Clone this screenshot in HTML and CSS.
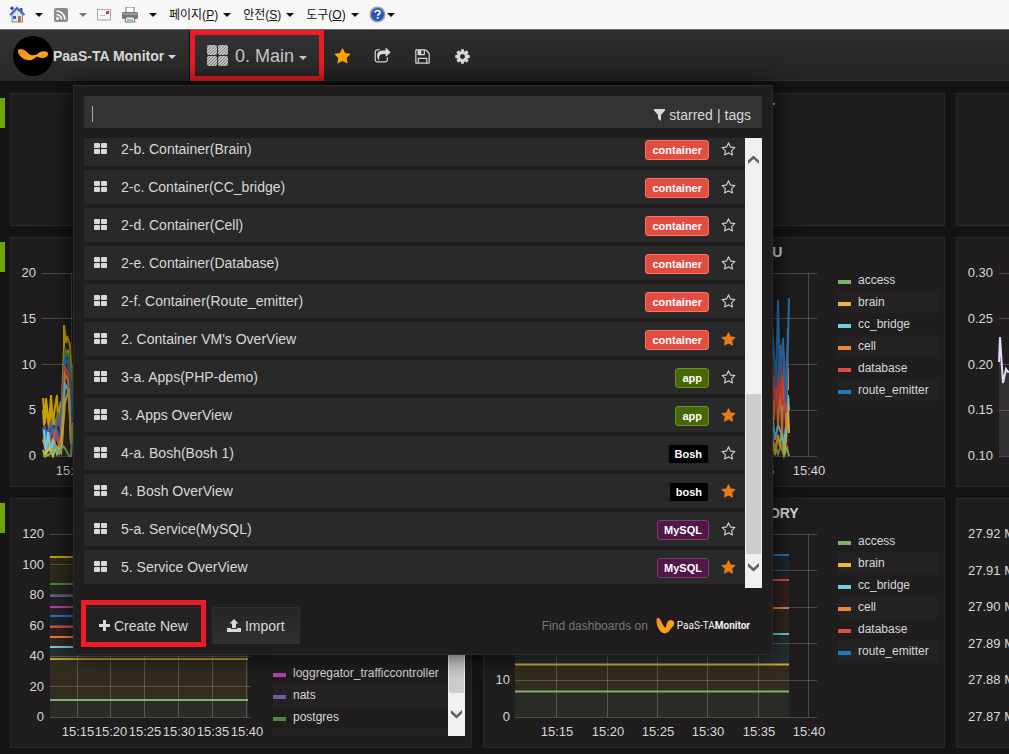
FILE: index.html
```html
<!DOCTYPE html>
<html lang="ko">
<head>
<meta charset="utf-8">
<meta name="viewport" content="width=device-width, initial-scale=1">
<title>PaaS-TA Monitor</title>
<link rel="stylesheet" href="styles.css">
</head>
<body>
<svg class="defs" aria-hidden="true">
  <defs>
    <pattern id="hatch" width="3" height="3" patternUnits="userSpaceOnUse"><rect width="3" height="3" fill="#c4c4c4"/><path d="M-1 1L1-1M0 3L3 0M2 4L4 2" stroke="#858585" stroke-width="1"/></pattern>
    <linearGradient id="flame" x1="0" y1="0" x2="1" y2="1"><stop offset="0" stop-color="#f58220"/><stop offset=".6" stop-color="#fba61c"/><stop offset="1" stop-color="#f58220"/></linearGradient>
  </defs>
  <symbol id="grid" viewBox="0 0 13 11"><path d="M1 0h4q1 0 1 1v3q0 1-1 1H1Q0 5 0 4V1q0-1 1-1zM8 0h4q1 0 1 1v3q0 1-1 1H8Q7 5 7 4V1q0-1 1-1zM1 6h4q1 0 1 1v3q0 1-1 1H1q-1 0-1-1V7q0-1 1-1zM8 6h4q1 0 1 1v3q0 1-1 1H8q-1 0-1-1V7q0-1 1-1z"/></symbol>
  <symbol id="star" viewBox="0 0 1792 1792"><path d="M1728 647q0 22-26 48l-363 354 86 500q1 7 1 20 0 21-10.500 35.500t-30.500 14.500q-19 0-40-12l-449-236-449 236q-22 12-40 12-21 0-31.500-14.500t-10.500-35.500q0-6 2-20l86-500-364-354q-25-27-25-48 0-37 56-46l502-73 225-455q19-41 49-41t49 41l225 455 502 73q56 9 56 46z"/></symbol>
  <symbol id="star-o" viewBox="0 0 1792 1792"><path d="M1201 1004l306-297-422-62-189-382-189 382-422 62 306 297-73 421 378-199 377 199zm527-357q0 22-26 48l-363 354 86 500q1 7 1 20 0 50-41 50-19 0-40-12l-449-236-449 236q-22 12-40 12-21 0-31.500-14.500t-10.500-35.500q0-6 2-20l86-500-364-354q-25-27-25-48 0-37 56-46l502-73 225-455q19-41 49-41t49 41l225 455 502 73q56 9 56 46z"/></symbol>
</svg>

<div class="browser-bar">
  <button class="tool" aria-label="홈"><svg width="16" height="17" viewBox="0 0 16 17"><path d="M3 9v7h10.500V9L8 3z" fill="#dfe6f2" stroke="#7a86a0"/><path d="M11 2h2.500v5L11 5z" fill="#3f55a0"/><path d="M1 9l7-7 7.500 7" fill="none" stroke="#3f6fc0" stroke-width="2"/><rect x="4" y="10" width="3" height="3" fill="#2f62b0"/><rect x="9" y="10" width="3" height="6" fill="#b87333"/><path d="M3 0l1 1.500L5.500 2 4 3 3 5 2 3 .5 2 2 1.500z" fill="#2334b8"/></svg><i class="down"></i></button>
  <button class="tool" aria-label="피드"><svg width="16" height="16" viewBox="1 0 16 16"><rect x="2" y="1" width="14" height="14" rx="2" fill="#8b8b8b"/><circle cx="5.500" cy="11.500" r="1.500" fill="#fff"/><path d="M4.500 7.500a5 5 0 0 1 5 5M4.500 4a8.500 8.500 0 0 1 8.500 8.500" fill="none" stroke="#fff" stroke-width="1.600"/></svg><i class="down muted"></i></button>
  <button class="tool" aria-label="메일"><svg width="14" height="12" viewBox="0 0 14 12"><rect x=".5" y=".5" width="13" height="10.500" fill="#f8f8f8" stroke="#a5a5a5"/><path d="M3 6.500h5" stroke="#bbb"/><rect x="9" y="2" width="3" height="3" fill="#c83c3c"/></svg></button>
  <button class="tool" aria-label="인쇄"><svg width="18" height="16" viewBox="1 0 18 16"><path d="M6 0h8v6H6z" fill="#fff" stroke="#777"/><rect x="2" y="5" width="16" height="7" rx="1.500" fill="#777"/><path d="M3 7h14" stroke="#bbb"/><path d="M6 10h8l1 5H5z" fill="#e6f0fa" stroke="#777"/><path d="M7 13h6" stroke="#4d9a6a"/></svg><i class="down"></i></button>
  <button class="tool menu"><span>페이지(<u>P</u>)</span><i class="down"></i></button>
  <button class="tool menu"><span>안전(<u>S</u>)</span><i class="down"></i></button>
  <button class="tool menu"><span>도구(<u>O</u>)</span><i class="down"></i></button>
  <button class="tool help" aria-label="도움말"><svg width="17" height="17" viewBox="0 0 17 17"><circle cx="8.500" cy="8.500" r="8" fill="#9a9fae"/><circle cx="8.500" cy="8.500" r="6.500" fill="#2b55b5"/><path d="M6 6.500q.3-2 2.600-2 2.400 0 2.400 2 0 1.200-1.300 1.800-1 .5-1 1.500" fill="none" stroke="#fff" stroke-width="1.700"/><rect x="7.800" y="11" width="1.800" height="1.800" fill="#fff"/></svg><i class="down"></i></button>
</div>

<nav class="navbar">
  <button class="brand">
    <svg width="40" height="40" viewBox="0 0 40 40"><circle cx="20" cy="20" r="20" fill="#000"/><path d="M5 14c2-2 6-1 9 2 2 2 4 4 7 3 3 0 4-2 6-3 3-1 7-1 8 1 1 3-3 5-6 5-3 0-4-2-6-1-2 2-5 4-8 3-4 0-11-5-10-10z" fill="url(#flame)"/></svg>
    <span>PaaS-TA Monitor</span><i class="caret"></i>
  </button>
  <button class="picker">
    <svg width="21" height="21" viewBox="0 0 21 21"><g fill="url(#hatch)"><rect width="10" height="10" rx="2"/><rect x="11" width="10" height="10" rx="2"/><rect y="11" width="10" height="10" rx="2"/><rect x="11" y="11" width="10" height="10" rx="2"/></g></svg>
    <span>0. Main</span><i class="caret"></i>
  </button>
  <div class="actions">
    <button class="favorite" aria-label="Star"><svg width="17" height="17"><use href="#star"/></svg></button>
    <button aria-label="Share"><svg width="17" height="17" viewBox="0 0 1792 1792"><path d="M1472 989v259q0 119-84.500 203.500t-203.500 84.500h-832q-119 0-203.500-84.500t-84.500-203.500v-832q0-119 84.500-203.500t203.500-84.500h255q13 0 22.500 9.500t9.500 22.500q0 27-26 32-77 26-133 60-10 4-16 4h-112q-66 0-113 47t-47 113v832q0 66 47 113t113 47h832q66 0 113-47t47-113v-214q0-19 18-29 28-13 54-37 16-16 35-8 21 9 21 29zm237-496l-384 384q-18 19-45 19-12 0-25-5-39-17-39-59v-192h-160q-323 0-438 131-119 137-74 473 3 23-20 34-8 2-12 2-16 0-26-13-10-14-21-31t-39.500-68.500-49.500-99.500-38.500-114-17.500-122q0-49 3.500-91t14-90 28-88 47-81.500 68.500-74 94.500-61.500 124.500-48.500 159.500-30.500 196.500-11h160v-192q0-42 39-59 13-5 25-5 26 0 45 19l384 384q19 19 19 45t-19 45z"/></svg></button>
    <button aria-label="Save"><svg width="17" height="17" viewBox="0 0 1792 1792"><path d="M512 1536h768v-384h-768v384zm896 0h128v-896q0-14-10-38.500t-20-34.500l-281-281q-10-10-34-20t-39-10v416q0 40-28 68t-68 28h-576q-40 0-68-28t-28-68v-416h-128v1280h128v-416q0-40 28-68t68-28h832q40 0 68 28t28 68v416zm-384-928v-320q0-13-9.500-22.500t-22.500-9.500h-192q-13 0-22.500 9.500t-9.500 22.500v320q0 13 9.500 22.500t22.500 9.500h192q13 0 22.500-9.500t9.500-22.500zm640 32v928q0 40-28 68t-68 28h-1344q-40 0-68-28t-28-68v-1344q0-40 28-68t68-28h928q40 0 88 20t76 48l280 280q28 28 48 76t20 88z"/></svg></button>
    <button aria-label="Settings"><svg width="17" height="17" viewBox="0 0 1792 1792"><path d="M1152 896q0-106-75-181t-181-75-181 75-75 181 75 181 181 75 181-75 75-181zm512-109v222q0 12-8 23t-20 13l-185 28q-19 54-39 91 35 50 107 138 10 12 10 25t-9 23q-27 37-99 108t-94 71q-12 0-26-9l-138-108q-44 23-91 38-16 136-29 186-7 28-36 28h-222q-14 0-24.500-8.500t-11.500-21.500l-28-184q-49-16-90-37l-141 107q-10 9-25 9-14 0-25-11-126-114-165-168-7-10-7-23 0-12 8-23 15-21 51-66.500t54-70.500q-27-50-41-99l-183-27q-13-2-21-12.500t-8-23.500v-222q0-12 8-23t19-13l186-28q14-46 39-92-40-57-107-138-10-12-10-24 0-10 9-23 26-36 98.500-107.500t94.500-71.500q13 0 26 10l138 107q44-23 91-38 16-136 29-186 7-28 36-28h222q14 0 24.500 8.500t11.500 21.500l28 184q49 16 90 37l142-107q9-9 24-9 13 0 25 10 129 119 165 170 7 8 7 22 0 12-8 23-15 21-51 66.500t-54 70.500q26 50 41 98l183 28q13 2 21 12.500t8 23.500z"/></svg></button>
  </div>
</nav>

<main class="dashboard">
  <section class="row">
    <button class="handle" aria-label="Row menu"></button>
    <div class="panels short">
      <article class="panel"></article>
      <article class="panel"><h2>CONTAINER HOST</h2></article>
      <article class="panel"></article>
    </div>
  </section>

  <section class="row">
    <button class="handle" aria-label="Row menu"></button>
    <div class="panels">
      <article class="panel">
        <h2></h2>
        <div class="body">
          <svg class="plot" width="260" height="220" viewBox="11 266 260 220">
            <g class="lines"><path d="M42 273.500H251M42 318.500H251M42 364.500H251M42 410.500H251M42 456.500H251M71.500 273V456"/></g>
            <path d="M43 456V399L46 420 48 397 51 425 53 395 56 420 59 405 62 418 64 366 67 343 73 345V456z" fill="#33291d"/>
            <g class="series bold">
              <path stroke="#cca300" d="M43 398l2 25 1-25 3 28 2-31 2 30 2-18 2-12 1 25 2-14 1-4 2 0 1 0L64 325l2 18 1-7 3 9 1 20 1 40 1-30"/>
              <path stroke="#cca300" d="M43 410l1 15 3-16 2 20 3-20 2 16 4-10 3 12L64 348l2 8 2-6 2 12 2 30"/>
              <path stroke="#508642" d="M55 430l3-18 2 16 3-24L65 348l2 8 2-2 2 50 2-40"/>
              <path stroke="#705da0" d="M44 425l3 12 4-16 3 17 4-18 3 10 4-72 4 8 3 55"/>
              <path stroke="#1f78c1" d="M43 428l2 16 2-14 2 20 3-25 3 18 2-14 3 14L65 358l3 3 3 60 2-30"/>
              <path stroke="#e24d42" d="M43 438l3 6 3-12 3 16 3-18 3 12 4-8L65 366l3 8 3 60"/>
              <path stroke="#ef843c" d="M43 440l3 10 2-12 3 14 2-14 4 14 4-14L65 374l3 6 3 60"/>
              <path stroke="#6ed0e0" d="M44 430l2 24 2-22 3 22 2-14 4 14 5-10L65 384l4 8 2 52 2-8"/>
              <path stroke="#eab839" d="M43 450l2 6 4-8 4 8 3-10 5 7 4-50 4-14 2 54"/>
              <path stroke="#7eb26d" d="M43 454l3 2 6-3 3-8 4 9 4-8 2 2 4 8 2 0 2-34"/>
            </g>
            <g class="ticks"><text x="36" y="277">20</text><text x="36" y="323">15</text><text x="36" y="369">10</text><text x="36" y="414">5</text><text x="36" y="460">0</text></g>
            <g class="times"><text x="72" y="475">15:15</text></g>
          </svg>
        </div>
      </article>
      <article class="panel">
        <h2>CONTAINER VM CPU</h2>
        <div class="body">
          <svg class="plot" width="350" height="220" viewBox="484 266 350 220">
            <g class="lines"><path d="M515 273.500H817M515 318.500H817M515 364.500H817M515 410.500H817M515 456.500H817M808.500 273V456"/></g>
            <path d="M772 456V400L776 360 780 380 784 390 787 380 789 340V456z" fill="#3a2622"/>
            <g class="series bold">
              <path stroke="#7eb26d" d="M772 450l3-6 3 10 3-8 3 10 3-8 2 8"/>
              <path stroke="#eab839" d="M772 435l3 20 3-20 2 12 2-18 2 26 2-14 1-18 1-18 1 28"/>
              <path stroke="#6ed0e0" d="M772 410l3 30 3-15 3 8 3 12 3-30 1-20 1 15"/>
              <path stroke="#ef843c" d="M772 375l2 45 2-40 2 45 2-40 2 48 2-60 2 55 1-45 1-15v22"/>
              <path stroke="#e24d42" d="M772 360l2 40 2-40 2 45 2-60 2 60 2-50 2 58 1-45 1-40"/>
              <path stroke="#e24d42" d="M774 388l3 22 3-28 3 24 3-14 2-30"/>
              <path stroke="#1f78c1" d="M772 325l2 30 2 33 2-88 2 80 3-42 3 65 2-60 1-45"/>
            </g>
            <g class="times"><text x="758" y="475">15:35</text><text x="809" y="475">15:40</text></g>
          </svg>
          <ul class="legend"><li class="c1">access</li><li class="c2">brain</li><li class="c3">cc_bridge</li><li class="c4">cell</li><li class="c5">database</li><li class="c6">route_emitter</li></ul>
        </div>
      </article>
      <article class="panel">
        <h2></h2>
        <div class="body">
          <svg class="plot" width="350" height="220" viewBox="957 266 350 220">
            <g class="lines"><path d="M999 273.500H1290M999 318.500H1290M999 364.500H1290M999 410.500H1290M999 456.500H1290"/></g>
            <path d="M999 456V362L1000 337 1003 383 1006 369 1008 372 1012 370 1200 372V456z" fill="#dedaf7" fill-opacity=".1"/>
            <g class="series bold"><path stroke="#dedaf7" d="M999 362L1000 337 1003 383 1006 369 1008 372 1012 370 1200 372"/></g>
            <g class="ticks"><text x="993" y="277">0.30</text><text x="993" y="323">0.25</text><text x="993" y="369">0.20</text><text x="993" y="414">0.15</text><text x="993" y="460">0.10</text></g>
          </svg>
        </div>
      </article>
    </div>
  </section>

  <section class="row">
    <button class="handle" aria-label="Row menu"></button>
    <div class="panels">
      <article class="panel">
        <h2></h2>
        <div class="body">
          <svg class="plot" width="260" height="220" viewBox="11 527 260 220">
            <g class="bands">
              <path fill="#7eb26d" d="M50 700h198v17H50z"/><path fill="#eab839" d="M50 659h198v41H50z"/><path fill="#6ed0e0" d="M50 647h198v12H50z"/><path fill="#ef843c" d="M50 637h198v10H50z"/><path fill="#e24d42" d="M50 627h198v10H50z"/><path fill="#1f78c1" d="M50 616h198v11H50z"/><path fill="#ba43a9" d="M50 607h198v9H50z"/><path fill="#705da0" d="M50 596h198v11H50z"/><path fill="#508642" d="M50 584h198v12H50z"/><path fill="#cca300" d="M50 557h198v27H50z"/>
            </g>
            <g class="lines"><path d="M50 534.500H251M50 564.500H251M50 594.500H251M50 625.500H251M50 656.500H251M50 686.500H251M50 717.500H251M77.500 534V717M110.500 534V717M144.500 534V717M178.500 534V717M212.500 534V717M246.500 534V717"/></g>
            <g class="series">
              <path stroke="#7eb26d" d="M50 700H248"/><path stroke="#c79b2c" d="M50 659H248"/><path stroke="#6ed0e0" d="M50 647H248"/><path stroke="#ef843c" d="M50 637H248"/><path stroke="#e24d42" d="M50 627H248"/><path stroke="#1f78c1" d="M50 616H248"/><path stroke="#ba43a9" d="M50 607H248"/><path stroke="#705da0" d="M50 596H248"/><path stroke="#508642" d="M50 584H248"/><path stroke="#cca300" d="M50 557H248"/>
            </g>
            <g class="ticks"><text x="44" y="538">120</text><text x="44" y="569">100</text><text x="44" y="599">80</text><text x="44" y="630">60</text><text x="44" y="660">40</text><text x="44" y="691">20</text><text x="44" y="721">0</text></g>
            <g class="times"><text x="78" y="736">15:15</text><text x="111" y="736">15:20</text><text x="145" y="736">15:25</text><text x="179" y="736">15:30</text><text x="213" y="736">15:35</text><text x="247" y="736">15:40</text></g>
          </svg>
          <div class="legend-scroll">
            <ul class="legend"><li class="c1">access</li><li class="c2">brain</li><li class="c3">cc_bridge</li><li class="c4">cell</li><li class="c5">database</li><li class="c6">etcd</li><li class="c7">loggregator_trafficcontroller</li><li class="c8">nats</li><li class="c9">postgres</li><li class="last"></li></ul>
            <div class="scrollbar legend-bar"><span class="thumb"></span><svg width="11" height="9" viewBox="0 0 11 9"><path d="M0 0l5.500 5L11 0v3.500l-5.500 5L0 3.500z" fill="#606060"/></svg></div>
          </div>
        </div>
      </article>
      <article class="panel">
        <h2>CONTAINER VM MEMORY</h2>
        <div class="body">
          <svg class="plot" width="350" height="220" viewBox="484 527 350 220">
            <g class="bands">
              <path fill="#7eb26d" d="M515 691h274v26H515z"/><path fill="#eab839" d="M515 665h274v26H515z"/><path fill="#6ed0e0" d="M515 634h274v31H515z"/><path fill="#ef843c" d="M515 608h274v26H515z"/><path fill="#e24d42" d="M515 580h274v28H515z"/><path fill="#1f78c1" d="M515 555h274v25H515z"/>
            </g>
            <g class="lines"><path d="M515 534.500H817M515 570.500H817M515 607.500H817M515 643.500H817M515 680.500H817M515 717.500H817M556.500 534V717M607.500 534V717M657.500 534V717M707.500 534V717M758.500 534V717M808.500 534V717"/></g>
            <g class="series">
              <path stroke="#7eb26d" d="M515 691.500H789"/><path stroke="#d9a935" d="M515 664.500H789"/><path stroke="#6ed0e0" d="M515 634H789"/><path stroke="#ef843c" d="M515 608H789"/><path stroke="#e24d42" d="M515 580H789"/><path stroke="#1f78c1" d="M515 555H789"/>
            </g>
            <g class="ticks"><text x="510" y="684">10</text><text x="510" y="721">0</text></g>
            <g class="times"><text x="557" y="736">15:15</text><text x="608" y="736">15:20</text><text x="658" y="736">15:25</text><text x="708" y="736">15:30</text><text x="759" y="736">15:35</text><text x="809" y="736">15:40</text></g>
          </svg>
          <ul class="legend"><li class="c1">access</li><li class="c2">brain</li><li class="c3">cc_bridge</li><li class="c4">cell</li><li class="c5">database</li><li class="c6">route_emitter</li></ul>
        </div>
      </article>
      <article class="panel">
        <h2></h2>
        <div class="body">
          <svg class="plot" width="350" height="220" viewBox="957 527 350 220">
            <g class="ticks left"><text x="968" y="538">27.92 Mil</text><text x="968" y="575">27.91 Mil</text><text x="968" y="611">27.90 Mil</text><text x="968" y="648">27.89 Mil</text><text x="968" y="684">27.88 Mil</text><text x="968" y="721">27.87 Mil</text></g>
          </svg>
        </div>
      </article>
    </div>
  </section>
</main>

<div class="search-popup">
  <div class="search">
    <i class="text-cursor"></i>
    <input type="text" aria-label="Find dashboards">
    <svg width="11" height="12" viewBox="0 0 11 12"><path d="M0 0h11v1.500L7 6v6L4 9.500V6L0 1.500z"/></svg>
    <a href="#">starred</a><span>|</span><a href="#">tags</a>
  </div>
  <div class="results">
    <ul class="list">
      <li><svg width="13" height="11"><use href="#grid"/></svg><a href="#">2-b. Container(Brain)</a><span class="tag red">container</span><button aria-label="Star"><svg width="15" height="15"><use href="#star-o"/></svg></button></li>
      <li><svg width="13" height="11"><use href="#grid"/></svg><a href="#">2-c. Container(CC_bridge)</a><span class="tag red">container</span><button aria-label="Star"><svg width="15" height="15"><use href="#star-o"/></svg></button></li>
      <li><svg width="13" height="11"><use href="#grid"/></svg><a href="#">2-d. Container(Cell)</a><span class="tag red">container</span><button aria-label="Star"><svg width="15" height="15"><use href="#star-o"/></svg></button></li>
      <li><svg width="13" height="11"><use href="#grid"/></svg><a href="#">2-e. Container(Database)</a><span class="tag red">container</span><button aria-label="Star"><svg width="15" height="15"><use href="#star-o"/></svg></button></li>
      <li><svg width="13" height="11"><use href="#grid"/></svg><a href="#">2-f. Container(Route_emitter)</a><span class="tag red">container</span><button aria-label="Star"><svg width="15" height="15"><use href="#star-o"/></svg></button></li>
      <li><svg width="13" height="11"><use href="#grid"/></svg><a href="#">2. Container VM's OverView</a><span class="tag red">container</span><button class="on" aria-label="Unstar"><svg width="15" height="15"><use href="#star"/></svg></button></li>
      <li><svg width="13" height="11"><use href="#grid"/></svg><a href="#">3-a. Apps(PHP-demo)</a><span class="tag green">app</span><button aria-label="Star"><svg width="15" height="15"><use href="#star-o"/></svg></button></li>
      <li><svg width="13" height="11"><use href="#grid"/></svg><a href="#">3. Apps OverView</a><span class="tag green">app</span><button class="on" aria-label="Unstar"><svg width="15" height="15"><use href="#star"/></svg></button></li>
      <li><svg width="13" height="11"><use href="#grid"/></svg><a href="#">4-a. Bosh(Bosh 1)</a><span class="tag black">Bosh</span><button aria-label="Star"><svg width="15" height="15"><use href="#star-o"/></svg></button></li>
      <li><svg width="13" height="11"><use href="#grid"/></svg><a href="#">4. Bosh OverView</a><span class="tag black">bosh</span><button class="on" aria-label="Unstar"><svg width="15" height="15"><use href="#star"/></svg></button></li>
      <li><svg width="13" height="11"><use href="#grid"/></svg><a href="#">5-a. Service(MySQL)</a><span class="tag purple">MySQL</span><button aria-label="Star"><svg width="15" height="15"><use href="#star-o"/></svg></button></li>
      <li><svg width="13" height="11"><use href="#grid"/></svg><a href="#">5. Service OverView</a><span class="tag purple">MySQL</span><button class="on" aria-label="Unstar"><svg width="15" height="15"><use href="#star"/></svg></button></li>
    </ul>
    <div class="scrollbar list-bar"><svg width="11" height="9" viewBox="0 0 11 9"><path d="M0 9l5.500-5L11 9V5.500L5.500.5 0 5.500z" fill="#606060"/></svg><span class="thumb"></span><svg width="11" height="9" viewBox="0 0 11 9"><path d="M0 0l5.500 5L11 0v3.500l-5.500 5L0 3.500z" fill="#606060"/></svg></div>
  </div>
  <div class="popup-footer">
    <button class="btn create"><svg width="11" height="11" viewBox="0 0 11 11"><path d="M4 0h3v4h4v3H7v4H4V7H0V4h4z"/></svg>Create New</button>
    <button class="btn"><svg width="14" height="13" viewBox="0 0 14 13"><path d="M7 0l4.500 4.500H9V9H5V4.500H2.500zM0 9h4v1h6V9h4v4H0z"/></svg>Import</button>
    <a class="find" href="#">Find dashboards on
      <svg width="19" height="18" viewBox="0 0 19 18"><path d="M1 1c2-1 4 2 5 5 1 2 2 4 4 5 0-3 1-7 4-8 3 0 5 2 4 5-1 2-3 3-4 5-2 3-5 4-7 3C3 15-1 6 1 1z" fill="url(#flame)"/></svg>
      <span class="wordmark">PaaS-TA<b>Monitor</b></span></a>
  </div>
</div>
</body>
</html>
```

FILE: styles.css
```css
* { box-sizing: border-box; }
body {
  margin: 0;
  min-height: 100vh;
  position: relative;
  overflow: hidden;
  background: #141414;
  color: #d8d9da;
  font: 14px/20px "Liberation Sans", "Noto Sans CJK KR", sans-serif;
}
button, input { font: inherit; color: inherit; background: none; border: 0; padding: 0; margin: 0; }
a { color: inherit; text-decoration: none; }
ul { list-style: none; margin: 0; padding: 0; }
svg { display: block; flex: none; fill: currentColor; }
.defs { position: absolute; width: 0; height: 0; }

/* Browser command bar */
.browser-bar {
  display: flex;
  align-items: center;
  gap: 10px;
  height: 30px;
  padding-left: 9px;
  background: #f7f7f7;
  border-bottom: 1px solid #6e6e6e;
  color: #111;
  font: 12px/16px "Liberation Sans", "Noto Sans CJK KR", sans-serif;
}
.tool { display: flex; align-items: center; gap: 10px; }
.menu { gap: 5px; padding-left: 2px; }
.help { gap: 1px; }
.down { border: 4px solid transparent; border-top-color: #111; border-bottom: 0; }
.down.muted { border-top-color: #777; }

/* Navigation bar */
.navbar {
  display: flex;
  height: 51px;
  background: linear-gradient(#2d2d2d, #252525);
  border-bottom: 1px solid #303030;
}
.caret { border: 4px solid transparent; border-top-color: currentColor; border-bottom: 0; }
.brand {
  display: flex;
  align-items: center;
  height: 51px;
  width: 190px;
  padding-left: 13px;
  background: linear-gradient(#333, #292929);
  border-right: 1px solid #0c0c0c;
  font-weight: bold;
}
.brand .caret { margin: 2px 0 0 4px; }
.picker {
  display: flex;
  align-items: center;
  height: 51px;
  width: 134px;
  padding-left: 12px;
  gap: 7px;
  border: 5px solid #ed1c24;
  background: linear-gradient(#333, #292929);
  color: #c8c8c8;
  font-size: 18px;
}
.picker .caret { margin: 5px 0 0 -2px; }
.actions { display: flex; align-items: center; gap: 23px; padding: 2px 0 0 10px; }
.favorite { color: #ffa500; }

/* Dashboard */
.dashboard { display: flex; flex-direction: column; gap: 11px; padding-top: 12px; }
.row { display: flex; gap: 5px; }
.handle { flex: none; width: 5px; height: 30px; margin-top: 5px; background: #6ea500; }
.panels { flex: 1; display: grid; grid-template-columns: repeat(3, minmax(462px, 1fr)); gap: 11px; min-height: 250px; }
.panels.short { min-height: 133px; }
.panel { display: flex; flex-direction: column; background: #1f1d1e; border: 1px solid #292929; }
.panel h2 { height: 28px; margin: 0; padding-right: 4px; font-size: 14px; line-height: 28px; text-align: center; }
.body { display: flex; justify-content: space-between; padding-right: 6px; }
.plot { overflow: hidden; }
.lines { stroke: #fff; stroke-opacity: .2; fill: none; }
.bands { fill-opacity: .1; }
.series { fill: none; stroke-width: 2; }
.ticks { font-size: 13px; text-anchor: end; }
.ticks.left { text-anchor: start; }
.times { font-size: 13px; text-anchor: middle; }

.legend { width: 100px; margin-top: 3px; font-size: 12px; line-height: 22px; }
.legend li { display: flex; align-items: center; gap: 7px; height: 22px; color: #d8d9da; }
.legend li:nth-child(even) { background: #232122; }
.legend li::before { content: ""; width: 13px; height: 4px; margin-top: 3px; }
.legend .c1::before { background: #7eb26d; }
.legend .c2::before { background: #eab839; }
.legend .c3::before { background: #6ed0e0; }
.legend .c4::before { background: #ef843c; }
.legend .c5::before { background: #e24d42; }
.legend .c6::before { background: #1f78c1; }
.legend .c7::before { background: #ba43a9; }
.legend .c8::before { background: #705da0; }
.legend .c9::before { background: #508642; }
.legend-scroll { display: flex; height: 209px; overflow: hidden; }
.legend-scroll .legend { width: 175px; }

.scrollbar { display: flex; flex-direction: column; align-items: center; width: 17px; background: #f0f0f0; }
.thumb { width: 15px; background: #cdcdcd; }
.legend-bar { justify-content: flex-end; padding-bottom: 17px; }
.legend-bar .thumb { height: 100px; margin-bottom: 17px; }

/* Dashboard search */
.search-popup {
  position: absolute;
  left: 73px;
  top: 85px;
  width: 700px;
  padding: 10px;
  background: #1f1d1e;
  border: 1px solid #2b2b2b;
  box-shadow: 0 0 24px rgba(0, 0, 0, .8);
}
.search { display: flex; align-items: center; gap: 4px; height: 32px; padding: 6px 11px 0 8px; background: #333; }
.search input { flex: 1; outline: 0; }
.text-cursor { width: 1px; height: 16px; margin-bottom: 3px; background: #aaa; }
.results { display: flex; height: 450px; margin-top: 10px; }
.list { flex: 1; display: flex; flex-direction: column; justify-content: flex-end; gap: 4px; padding-bottom: 4px; overflow: hidden; }
.list li { flex: none; display: flex; align-items: center; height: 34px; padding: 0 9px 0 10px; background: #292929; }
.list li > svg { margin-bottom: 1px; }
.list a { flex: 1; margin-left: 14px; }
.list .on { color: #eb7b18; }
.tag {
  height: 20px;
  margin: 2px 12px 0 0;
  padding: 0 6px;
  border: 1px solid;
  border-radius: 3px;
  color: #fff;
  font-size: 11px;
  font-weight: bold;
  line-height: 19px;
}
.red { background: #e24d42; border-color: #ff7068; }
.green { background: #476605; border-color: #6c8c2a; }
.black { background: #000; border-color: #262626; }
.purple { background: #511749; border-color: #78406f; }
.list-bar { padding: 17px 0 16px; }
.list-bar .thumb { height: 160px; margin: auto 0 9px; }

.popup-footer { display: flex; align-items: center; padding-top: 19px; }
.btn {
  display: flex;
  align-items: center;
  gap: 4px;
  height: 37px;
  padding: 0 14px;
  margin-right: 10px;
  background: linear-gradient(#262626, #303030);
  border: 1px solid #303030;
  border-radius: 2px;
}
.create { position: relative; margin-left: 1px; background: #232222; padding: 0 13px; }
.create::after { content: ""; position: absolute; inset: -8px -5px -4px -5px; border: 5px solid #ed1c24; }
.find { display: flex; align-items: center; gap: 8px; margin-left: auto; padding-right: 12px; color: #767676; font-size: 12px; }
.wordmark { margin-left: -6px; color: #f2f2f2; font-family: Roboto, "Liberation Sans", sans-serif; font-size: 10px; }
```
